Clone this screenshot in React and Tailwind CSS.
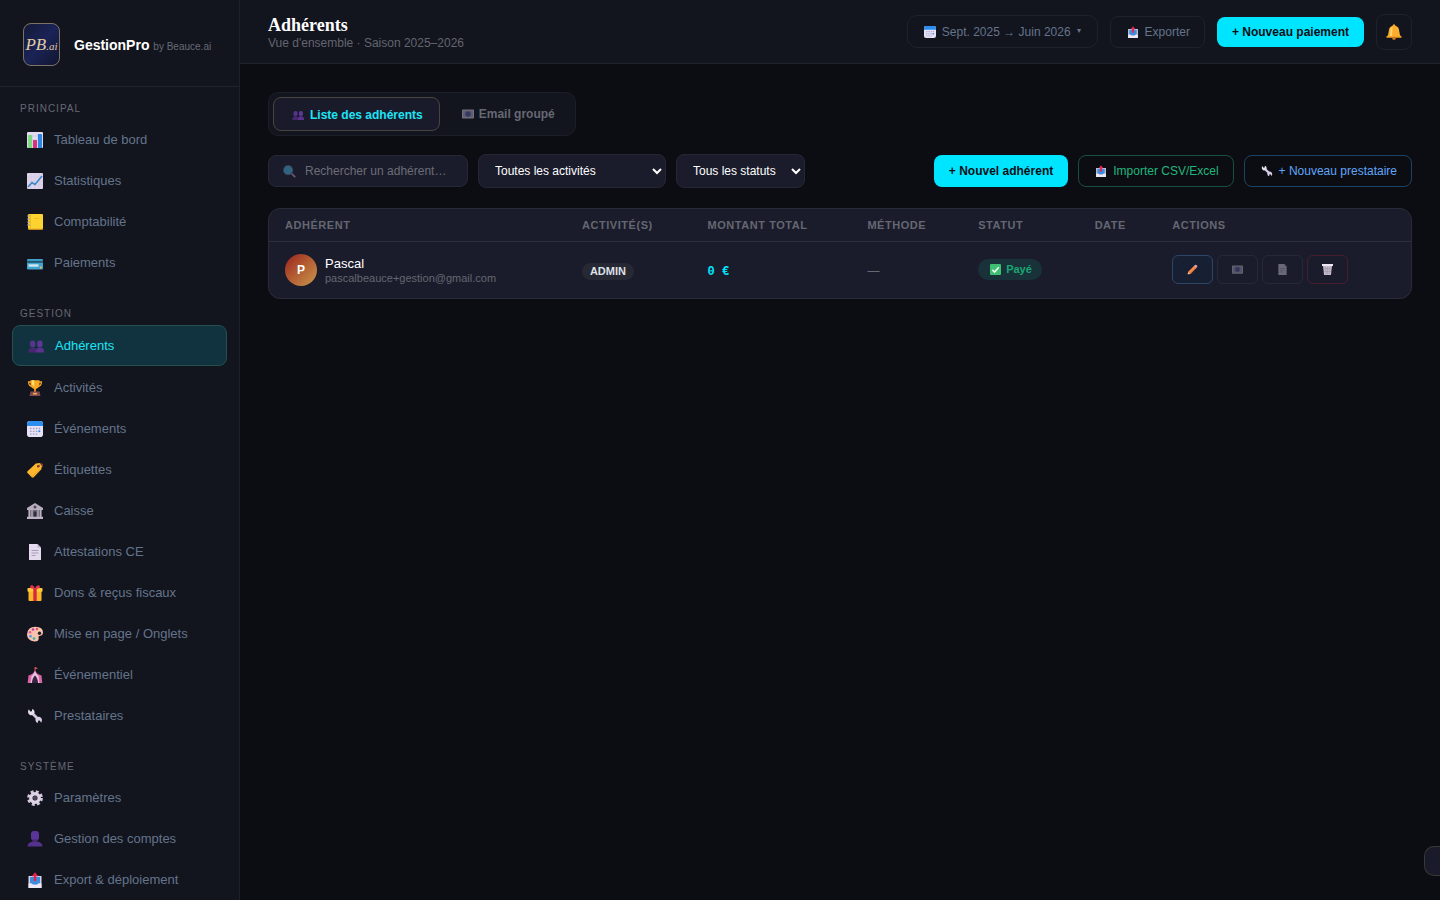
import React, { useState } from 'react';
import clsx from 'clsx';

const ICONS = {
  chart: (
    <>
      <rect width="16" height="16" rx="1" fill="#e3dcf0" />
      <path d="M0 4h16M0 8h16M0 12h16" stroke="#cbbfdd" strokeWidth=".6" />
      <rect x="1.2" y="3" width="4" height="13" rx=".6" fill="#7ad97c" />
      <rect x="6" y="8" width="4" height="8" rx=".6" fill="#d8307e" />
      <rect x="10.9" y="2" width="4.1" height="14" rx=".6" fill="#2f86e0" />
    </>
  ),
  trend: (
    <>
      <rect width="16" height="16" rx="1" fill="#ddd3ea" />
      <path d="M0 4h16M0 8h16M0 12h16M4 0v16M8 0v16M12 0v16" stroke="#cdc2dc" strokeWidth=".5" />
      <path d="M1 14l4-4.500 3 2L15 3" fill="none" stroke="#3b86c9" strokeWidth="1.600" />
    </>
  ),
  ledger: (
    <>
      <rect x="1" y="1" width="15" height="15" rx="1" fill="#c98a1c" />
      <rect x="1" y="0" width="15" height="14.800" rx="1" fill="#fcd32f" />
      <path d="M0 2h3M0 5h3M0 8h3M0 11h3" stroke="#9b8fb0" strokeWidth="1" />
      <path d="M3.500 0v14.800" stroke="#e5b31e" strokeWidth=".7" />
      <path d="M7 4.500h5" stroke="#f0b41d" strokeWidth=".8" />
    </>
  ),
  card: (
    <>
      <rect y="4" width="16" height="10.500" rx="1.200" fill="#3fa4cf" />
      <rect y="5.800" width="16" height="2" fill="#25586f" />
      <rect x="1.500" y="9.300" width="10" height="2.400" fill="#d4e6f1" />
      <circle cx="13.800" cy="12.500" r="1" fill="#f5c63b" />
    </>
  ),
  people: (
    <>
      <rect x="2" y="2.500" width="5.400" height="7" rx="2.400" fill="#56348c" />
      <rect x="9.200" y="2.500" width="5.400" height="7" rx="2.400" fill="#5c3893" />
      <path d="M.5 14.500v-1.500q0-3 3.500-3.200h1.500Q9 10 9 13v1.500z" fill="#472672" />
      <path d="M8 14.500V13q0-3 3.300-3.200h1.400q3.300.2 3.300 3.200v1.500z" fill="#5a338d" />
    </>
  ),
  person: (
    <>
      <rect x="4" y="0" width="8" height="9.500" rx="3" fill="#5a3496" />
      <path d="M5.500 8.500h5V12h-5z" fill="#452671" />
      <path d="M.5 15.500q0-4 5-4.800h5q5 .8 5 4.800z" fill="#55308c" />
    </>
  ),
  trophy: (
    <>
      <path d="M4 2H1.600q0 4.500 4 4.500M12 2h2.400q0 4.500-4 4.500" fill="none" stroke="#f2a52b" strokeWidth="1.300" />
      <path d="M3.500.3h9v4q0 4.200-4.500 4.900-4.500-.7-4.500-4.900z" fill="#f9a825" />
      <path d="M4.800.3h2.400v6q-2.400-1-2.400-3z" fill="#ffe06a" />
      <path d="M7 9h2v3H7z" fill="#e28424" />
      <path d="M3.500 11.500h9l1 4.500h-11z" fill="#7d4a55" />
      <rect x="6" y="12.800" width="4" height="1.700" fill="#f3a93b" />
    </>
  ),
  calendar: (
    <>
      <rect width="16" height="16" rx="2.800" fill="#e8e2f5" />
      <path d="M0 5V3Q0 0 3 0h10q3 0 3 3v2z" fill="#2c8df0" />
      <path d="M3 7.500h10.500M3 10.300h10.500M3 13.100h7.500" stroke="#a09bc4" strokeWidth="1.300" strokeDasharray="1.500 1.400" />
      <circle cx="12.300" cy="10.300" r="1" fill="#2c8df0" />
    </>
  ),
  tag: (
    <>
      <path d="M.5 9.300L8.800 1.500 13 1l2 3-.8 3.500-7.500 7.800q-1 .8-2 0L.5 11q-.7-.9 0-1.700z" fill="#fcb72f" />
      <path d="M1 11l4 3.900 8.800-8" fill="none" stroke="#ea8e22" strokeWidth=".8" />
      <circle cx="11.300" cy="4.300" r="1.300" fill="#6b3a2c" />
      <path d="M11.500 4q2.500-3.200 4-1.800.7 1.300-.5 3" fill="none" stroke="#c84f45" strokeWidth=".8" />
    </>
  ),
  bank: (
    <>
      <path d="M8 0l8 5v2H0V5z" fill="#b8adbf" />
      <path d="M1 7h14v7H1z" fill="#716a7d" />
      <path d="M2.500 7v7M5 7v7M11 7v7M13.500 7v7" stroke="#b9b0c2" strokeWidth="1.200" />
      <rect x="6.600" y="8.500" width="2.800" height="5.500" fill="#342f3d" />
      <circle cx="8" cy="4" r="1.500" fill="#4f4858" />
      <path d="M0 13.700h16V16H0z" fill="#bdb3c5" />
    </>
  ),
  doc: (
    <>
      <path d="M2 0h8.500L14 3.500V16H2z" fill="#e4daee" />
      <path d="M10.500 0v3.500H14z" fill="#b7a9c9" />
      <path d="M4.500 6.500h7M4.500 9h7M4.500 11.500h4" stroke="#a093b3" strokeWidth=".9" />
    </>
  ),
  gift: (
    <>
      <path d="M1.500 6h13v9q0 1-1 1h-11q-1 0-1-1z" fill="#fbb62b" />
      <rect x=".5" y="3" width="15" height="3.800" rx=".7" fill="#fdca3a" />
      <path d="M6.300 3h3.400v13H6.300z" fill="#d52a3c" />
      <path d="M8 4Q3 4 3 1.800 3.200 0 5.300.3 7.300 1 8 4zM8 4q5 0 5-2.200Q12.800 0 10.700.3 8.700 1 8 4z" fill="#e3364c" />
    </>
  ),
  palette: (
    <>
      <path d="M8.500.8Q16 1 16 6.500q0 3-3.500 3.500-1.500 0-.8 2 .3 3.500-4.200 3.500Q0 14.500 0 8.500.3 1 8.500.8z" fill="#f8c3ac" />
      <circle cx="12.500" cy="7.300" r="1.700" fill="#2a1b26" />
      <circle cx="3" cy="6.300" r="1.300" fill="#f2549b" />
      <circle cx="6" cy="3.500" r="1.300" fill="#c23ba7" />
      <circle cx="10" cy="3" r="1.200" fill="#e14f5a" />
      <circle cx="3.500" cy="10.200" r="1.300" fill="#4798e6" />
      <circle cx="7" cy="12.500" r="1.300" fill="#28b4a2" />
    </>
  ),
  tent: (
    <>
      <path d="M8 0v5" stroke="#c84b50" strokeWidth="1" />
      <path d="M8 0l3 1.200L8 2.400z" fill="#e9525e" />
      <path d="M8 3.500q2 4 6.500 5l.8 7.500H.7l.8-7.500Q6 7.500 8 3.500z" fill="#dd65a5" />
      <path d="M8 4Q6.500 8 4.500 9.300L3.600 16H6l2-6 2 6h2.400l-.9-6.700Q9.500 8 8 4z" fill="#e5c4e2" />
      <path d="M8 8.500q3 3 3 7.500H5q0-4.500 3-7.500z" fill="#3a2340" />
    </>
  ),
  wrench: (
    <>
      <path d="M4.500 4.500l7 7" stroke="#d5cbe0" strokeWidth="2.900" />
      <path d="M1.800 1.300L3.300 3.600l1.600-.4.200-2.200Q8 1.800 7.500 5 5.500 8 3 7-.2 5.300 1.800 1.300z" fill="#e8e0ee" />
      <path d="M14.200 14.700l-1.500-2.300-1.600.4-.2 2.200Q8 14.200 8.500 11q2-3 4.500-2 3.200 1.700 1.200 5.700z" fill="#d9cfe4" />
    </>
  ),
  gear: (
    <>
      <circle cx="8" cy="8" r="6.500" fill="none" stroke="#d2c8dd" strokeWidth="2.800" strokeDasharray="2.900 2.205" />
      <circle cx="8" cy="8" r="4.200" fill="none" stroke="#ddd4e6" strokeWidth="3.400" />
      <circle cx="8" cy="8" r="2.200" fill="#4d4659" />
    </>
  ),
  outbox: (
    <>
      <path d="M1.500 4h13v12h-13z" fill="#d9d2e8" />
      <path d="M3 5h10v6l-2 1.500H5L3 11z" fill="#3d8ddc" />
      <path d="M1.500 11.500h3.500l1 1.500h4l1-1.500h3.500V16h-13z" fill="#eee7f6" />
      <path d="M6.800 9V4.300H4.800L8 .3l3.200 4H9.200V9z" fill="#e2244e" />
    </>
  ),
  mail: (
    <>
      <rect y="2" width="16" height="12" rx="1" fill="#d3cde0" />
      <path d="M1.500 3.500h13v9h-13z" fill="#a8a2c2" />
      <circle cx="8" cy="8" r="3.600" fill="#5561a0" />
    </>
  ),
  search: (
    <>
      <path d="M11 11l3.500 3.500" stroke="#66516f" strokeWidth="2.200" strokeLinecap="round" />
      <circle cx="7" cy="7" r="5.800" fill="#393b51" />
      <circle cx="7" cy="7" r="5" fill="#2f6480" />
    </>
  ),
  bell: (
    <>
      <path d="M8 .2q1.300 0 1.400 1.500 3.600 1 3.800 5.300.2 4 2.300 6H.5q2.100-2 2.300-6 .2-4.300 3.800-5.300Q6.700.2 8 .2z" fill="#fbae2e" />
      <path d="M6.500 2.500Q4.500 4 4.600 7.500L4 12h2z" fill="#ffdc73" />
      <path d="M.5 12.300h15v1.500H.5z" fill="#f39a23" />
      <path d="M6 14h4q-.3 2-2 2t-2-2z" fill="#c87524" />
    </>
  ),
  check: (
    <>
      <rect width="16" height="16" rx="1.500" fill="#3fbf72" />
      <path d="M3.500 8.500l3.200 3.200 6-7" fill="none" stroke="#f1fff5" strokeWidth="2.200" />
    </>
  ),
  pencil: (
    <>
      <path d="M1 15l.7-3.800L10.300 2.500l3.400 3.400-8.600 8.600z" fill="#f0793a" />
      <path d="M10 3l1.600-1.600q1.300-1 2.700.3t.3 2.700L13 6z" fill="#ee9aa5" />
      <path d="M1 15l.7-3.200L4.500 14.500z" fill="#e8c3a0" />
      <path d="M3.500 12L11.500 4" stroke="#ffaf62" strokeWidth="1.200" />
    </>
  ),
  trash: (
    <>
      <path d="M0 0h16v3H0z" fill="#eee8f3" />
      <path d="M1.500 3h13L13 16H3z" fill="#c4bccd" />
      <path d="M4.500 4l1.500 11M8 4v11M11.500 4L10 15M2.500 7h11M3 11h10" stroke="#9c95a5" strokeWidth=".8" />
    </>
  )
};

const NAV = [
  {
    title: 'Principal',
    items: [
      { icon: 'chart', label: 'Tableau de bord' },
      { icon: 'trend', label: 'Statistiques' },
      { icon: 'ledger', label: 'Comptabilité' },
      { icon: 'card', label: 'Paiements' }
    ]
  },
  {
    title: 'Gestion',
    items: [
      { icon: 'people', label: 'Adhérents' },
      { icon: 'trophy', label: 'Activités' },
      { icon: 'calendar', label: 'Événements' },
      { icon: 'tag', label: 'Étiquettes' },
      { icon: 'bank', label: 'Caisse' },
      { icon: 'doc', label: 'Attestations CE' },
      { icon: 'gift', label: 'Dons & reçus fiscaux' },
      { icon: 'palette', label: 'Mise en page / Onglets' },
      { icon: 'tent', label: 'Événementiel' },
      { icon: 'wrench', label: 'Prestataires' }
    ]
  },
  {
    title: 'Système',
    items: [
      { icon: 'gear', label: 'Paramètres' },
      { icon: 'person', label: 'Gestion des comptes' },
      { icon: 'outbox', label: 'Export & déploiement' }
    ]
  }
];

const COLUMNS = [
  { label: 'Adhérent', width: 'w-[26%]' },
  { label: 'Activité(s)', width: 'w-[11%]' },
  { label: 'Montant total', width: 'w-[14%]' },
  { label: 'Méthode', width: 'w-[9.7%]' },
  { label: 'Statut', width: 'w-[10.2%]' },
  { label: 'Date', width: 'w-[6.8%]' },
  { label: 'Actions', width: '' }
];

const MEMBERS = [
  {
    name: 'Pascal',
    email: 'pascalbeauce+gestion@gmail.com',
    activity: 'ADMIN',
    total: '0 €',
    method: '—',
    status: 'Payé',
    date: ''
  }
];

const ROW_ACTIONS = [
  { icon: 'pencil', label: 'Modifier', className: 'border-[#2d4668] bg-[#172033]' },
  { icon: 'mail', label: 'Envoyer un email', className: 'border-[#3a3d4a] opacity-40', disabled: true },
  { icon: 'doc', label: 'Reçu', className: 'border-[#3a3d4a] opacity-40', disabled: true },
  { icon: 'trash', label: 'Supprimer', className: 'border-[#481e2e]' }
];

function Icon({ name, className = 'size-4' }) {
  return (
    <svg viewBox="0 0 16 16" aria-hidden="true" className={clsx('shrink-0', className)}>
      {ICONS[name]}
    </svg>
  );
}

function Logo() {
  return (
    <div className="flex h-[43px] w-[37px] shrink-0 items-center justify-center rounded-lg border border-[#7d7364] bg-linear-to-br from-[#141a38] via-[#1b2357] to-[#10152f] font-['Liberation_Serif',serif] text-[17px] font-medium italic text-[#e0cda3]">
      PB<span className="pt-1 text-[11px]">.ai</span>
    </div>
  );
}

function Sidebar({ current, onSelect }) {
  return (
    <aside className="w-60 shrink-0 overflow-y-auto border-r border-[#1d1f2b] bg-[#12141e] [scrollbar-width:none]">
      <div className="flex h-[87px] items-center gap-[14px] border-b border-[#20222d] px-[23px] pt-[3px]">
        <Logo />
        <div className="whitespace-nowrap text-sm font-bold text-white">
          GestionPro <span className="text-[10px] font-normal text-[#686b76]">by Beauce.ai</span>
        </div>
      </div>
      <nav className="flex flex-col gap-2 px-3">
        {NAV.map((group) => (
          <div key={group.title}>
            <h2 className="px-2 pt-[14px] pb-1 text-[10px] leading-[15px] tracking-[1px] text-[#666973] uppercase">
              {group.title}
            </h2>
            {group.items.map((item) => {
              const active = item.label === current;
              return (
                <button
                  key={item.label}
                  type="button"
                  onClick={() => onSelect(item.label)}
                  className={clsx(
                    'mb-[2px] flex w-full items-center gap-[10px] rounded-lg px-[14px] text-left text-[13px]',
                    active
                      ? 'h-[41px] border border-[#25504d] bg-[#11333f] text-[#1fe4f5]'
                      : 'h-[39px] text-[#64748b]'
                  )}>
                  <span className="flex w-[18px] justify-center pt-px">
                    <Icon name={item.icon} />
                  </span>
                  {item.label}
                </button>
              );
            })}
          </div>
        ))}
      </nav>
    </aside>
  );
}

function Topbar() {
  return (
    <header className="flex h-16 shrink-0 items-center justify-between border-b border-[#20222d] bg-[#12141e] px-7">
      <div className="pt-[2px]">
        <h1 className="font-['Liberation_Serif',serif] text-lg leading-5 font-bold text-white">Adhérents</h1>
        <p className="text-xs leading-4 text-[#63656f]">Vue d'ensemble · Saison 2025–2026</p>
      </div>
      <div className="flex items-center gap-3">
        <button
          type="button"
          className="flex h-[33px] items-center gap-[6px] rounded-[10px] border border-[#1f212c] px-4 text-xs text-[#64748b]">
          <Icon name="calendar" className="size-3" />
          <span>
            Sept. 2025 <span className="font-['Noto_Sans',sans-serif] leading-none">→</span> Juin 2026
          </span>
          <span className="text-[8px]">▾</span>
        </button>
        <button
          type="button"
          className="flex h-8 items-center gap-[6px] rounded-lg border border-[#1f212c] pr-[14px] pl-4 text-xs text-[#64748b]">
          <Icon name="outbox" className="size-3" />
          Exporter
        </button>
        <button type="button" className="h-[30px] rounded-lg bg-[#00e5ff] px-[15px] text-xs font-bold text-[#0b0e16]">
          + Nouveau paiement
        </button>
        <button
          type="button"
          aria-label="Notifications"
          className="flex size-9 items-center justify-center rounded-lg border border-[#1f212c]">
          <Icon name="bell" />
        </button>
      </div>
    </header>
  );
}

function Tabs() {
  const [tab, setTab] = useState('list');
  const tabs = [
    { id: 'list', icon: 'people', label: 'Liste des adhérents' },
    { id: 'mail', icon: 'mail', label: 'Email groupé' }
  ];
  return (
    <div role="tablist" className="flex h-11 w-fit rounded-[10px] border border-[#1c1e29] bg-[#12141e] p-1">
      {tabs.map((t) => (
        <button
          key={t.id}
          type="button"
          role="tab"
          aria-selected={tab === t.id}
          onClick={() => setTab(t.id)}
          className={clsx(
            'flex items-center rounded-lg text-xs font-bold',
            tab === t.id
              ? 'h-[34px] gap-[6px] border border-[#48443f] bg-[#191b2b] pr-4 pl-[18px] pt-px text-[#1fe4f5]'
              : 'h-[34px] gap-[5px] pr-4 pl-[22px] text-[#666872]'
          )}>
          <Icon name={t.icon} className={clsx('size-3', tab !== t.id && 'opacity-50')} />
          {t.label}
        </button>
      ))}
    </div>
  );
}

function Toolbar() {
  return (
    <div className="mt-[18px] flex items-center justify-between">
      <div className="flex items-center gap-[10px]">
        <label className="flex h-8 w-[200px] items-center gap-[9px] rounded-lg border border-[#252735] bg-[#1a1c2b] px-[13px]">
          <Icon name="search" className="size-[14px]" />
          <input
            type="text"
            aria-label="Rechercher un adhérent"
            placeholder="Rechercher un adhérent…"
            className="w-full min-w-0 bg-transparent text-xs text-white outline-none placeholder:text-[#6c6d77]"
          />
        </label>
        <select
          aria-label="Activité"
          className="h-[34px] w-[188px] rounded-lg border border-[#252735] bg-[#1a1c2b] pl-3 text-xs text-white">
          <option>Toutes les activités</option>
        </select>
        <select
          aria-label="Statut"
          className="h-[34px] w-[129px] rounded-lg border border-[#252735] bg-[#1a1c2b] pl-3 text-xs text-white">
          <option>Tous les statuts</option>
        </select>
      </div>
      <div className="flex items-center gap-[10px]">
        <button type="button" className="h-8 rounded-lg bg-[#00e5ff] px-[15px] text-xs font-bold text-[#0b0e16]">
          + Nouvel adhérent
        </button>
        <button
          type="button"
          className="flex h-8 items-center gap-[6px] rounded-lg border border-[#175040] pr-[14px] pl-4 text-xs text-[#20b77c]">
          <Icon name="outbox" className="size-3" />
          Importer CSV/Excel
        </button>
        <button
          type="button"
          className="flex h-8 items-center gap-[6px] rounded-lg border border-[#1c4265] pr-[14px] pl-4 text-xs text-[#60a5fa]">
          <Icon name="wrench" className="size-3" />
          + Nouveau prestataire
        </button>
      </div>
    </div>
  );
}

function MembersTable() {
  return (
    <div className="mt-5 overflow-hidden rounded-xl border border-[#292b39] bg-[#1a1c2b]">
      <table className="w-full table-fixed text-left">
        <thead>
          <tr className="h-8 border-b border-[#2d303d]">
            {COLUMNS.map((col) => (
              <th
                key={col.label}
                scope="col"
                className={clsx('px-4 text-[11px] font-bold tracking-wider whitespace-nowrap text-[#656772] uppercase', col.width)}>
                {col.label}
              </th>
            ))}
          </tr>
        </thead>
        <tbody>
          {MEMBERS.map((m) => (
            <tr key={m.email} className="h-[57px]">
              <td className="px-4">
                <div className="flex items-center gap-2">
                  <div className="flex size-8 shrink-0 items-center justify-center rounded-full bg-linear-to-br from-[#991b1b] to-[#c9974e] text-xs font-bold text-white">
                    {m.name[0]}
                  </div>
                  <div>
                    <div className="text-[13px] leading-4 text-white">{m.name}</div>
                    <div className="text-[11px] leading-3 text-[#656772]">{m.email}</div>
                  </div>
                </div>
              </td>
              <td className="px-4">
                <span className="inline-flex h-[17px] items-center rounded-full bg-[#262834] px-2 text-[11px] font-bold text-[#dfe1e8]">
                  {m.activity}
                </span>
              </td>
              <td className="px-4 pt-1 font-['Liberation_Mono',monospace] text-xs font-bold text-[#00e5ff]">{m.total}</td>
              <td className="px-4 pt-[2px] text-xs text-[#656772]">{m.method}</td>
              <td className="px-4">
                <span className="inline-flex h-[21px] items-center gap-[5px] rounded-full bg-[#19323a] pr-[10px] pl-3 text-[11px] font-bold text-[#18a874]">
                  <Icon name="check" className="size-[11px]" />
                  {m.status}
                </span>
              </td>
              <td className="px-4 text-xs text-[#656772]">{m.date}</td>
              <td className="px-4">
                <div className="flex gap-1">
                  {ROW_ACTIONS.map((action) => (
                    <button
                      key={action.label}
                      type="button"
                      aria-label={action.label}
                      disabled={action.disabled}
                      className={clsx('flex h-[29px] w-[41px] items-center justify-center rounded-md border', action.className)}>
                      <Icon name={action.icon} className="size-[11px]" />
                    </button>
                  ))}
                </div>
              </td>
            </tr>
          ))}
        </tbody>
      </table>
    </div>
  );
}

export default function App() {
  const [current, setCurrent] = useState('Adhérents');
  return (
    <div className="flex h-screen overflow-hidden bg-[#0c0d12] font-['Liberation_Sans',Arial,sans-serif]">
      <Sidebar current={current} onSelect={setCurrent} />
      <div className="flex min-w-0 flex-1 flex-col">
        <Topbar />
        <main className="flex-1 overflow-y-auto p-7">
          <Tabs />
          <Toolbar />
          <MembersTable />
        </main>
      </div>
      {/* Drawer handle peeking in from the right edge */}
      <button
        type="button"
        aria-label="Ouvrir le panneau"
        className="fixed right-0 bottom-6 h-[30px] w-4 rounded-l-[10px] border border-r-0 border-[#3a3936] bg-[#191b2b]"
      />
    </div>
  );
}
